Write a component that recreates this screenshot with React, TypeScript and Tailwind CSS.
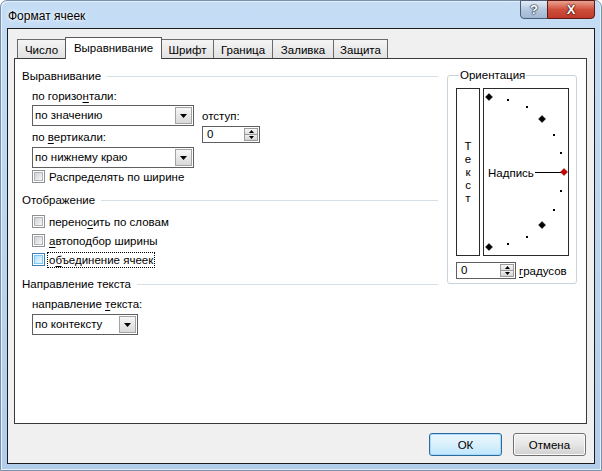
import React from 'react';

// Excel "Формат ячеек" dialog, Windows 7 look

function TriDown({ w = 7, h = 4 }: { w?: number; h?: number }) {
  return (
    <svg width={w} height={h} viewBox={`0 0 ${w} ${h}`}>
      <path d={`M0 0H${w}L${w / 2} ${h}Z`} fill="#000" />
    </svg>
  );
}

function TriUp({ w = 7, h = 4 }: { w?: number; h?: number }) {
  return (
    <svg width={w} height={h} viewBox={`0 0 ${w} ${h}`}>
      <path d={`M0 ${h}H${w}L${w / 2} 0Z`} fill="#000" />
    </svg>
  );
}

function Combo({ value, width }: { value: string; width: string }) {
  return (
    <div className={`${width} h-[21px] flex border border-[#5f5f5f] bg-white`}>
      <span className="flex-1 pl-[2px] leading-[19px] whitespace-nowrap">{value}</span>
      <span className="w-[17px] m-px flex items-center justify-center border border-[#a3a3a3] bg-gradient-to-b from-[#f7f7f7] to-[#d9d9d9]">
        <TriDown />
      </span>
    </div>
  );
}

function Spin({ value, width }: { value: string; width: string }) {
  return (
    <div className={`${width} h-[17px] flex border border-[#5f5f5f] bg-white`}>
      <span className="flex-1 pl-[4px] leading-[15px]">{value}</span>
      <span className="w-[14px] my-px mr-px flex flex-col">
        <span className="flex-1 flex items-center justify-center border border-[#9c9c9c] bg-gradient-to-b from-[#f8f8f8] to-[#dedede]">
          <TriUp w={5} h={3} />
        </span>
        <span className="flex-1 flex items-center justify-center border border-t-0 border-[#9c9c9c] bg-gradient-to-b from-[#f0f0f0] to-[#d4d4d4]">
          <TriDown w={5} h={3} />
        </span>
      </span>
    </div>
  );
}

function Check({ hover }: { hover?: boolean }) {
  return (
    <span
      className={`w-[13px] h-[13px] shrink-0 p-px border bg-white ${
        hover ? 'border-[#3c7fb1]' : 'border-[#8e8f8f]'
      }`}
    >
      <span
        className={`block w-full h-full border ${
          hover
            ? 'border-[#79c6f9] bg-gradient-to-br from-[#b1dffd] to-[#e9f7fe]'
            : 'border-[#b0b4ba] bg-gradient-to-br from-[#cfd2d6] to-[#f7f7f7]'
        }`}
      />
    </span>
  );
}

function CheckRow({ children, focus }: { children: React.ReactNode; focus?: boolean }) {
  return (
    <div className="h-[19px] flex items-center">
      <Check hover={focus} />
      <span
        className={`ml-[2px] px-px border whitespace-nowrap leading-[14px] ${
          focus ? 'border-dotted border-[#000]' : 'border-transparent'
        }`}
      >
        {children}
      </span>
    </div>
  );
}

function GroupHeader({ title }: { title: string }) {
  return (
    <div className="h-[16px] flex items-center pl-[7px]">
      <span className="whitespace-nowrap">{title}</span>
      <span className="flex-1 h-px ml-[6px] bg-[#d5dfe5]" />
    </div>
  );
}

function U({ children }: { children: React.ReactNode }) {
  return <span className="underline underline-offset-[2px]">{children}</span>;
}

function Dial() {
  const cx = 5;
  const cy = 83;
  const r = 75;
  const marks = [];
  for (let i = 0; i <= 12; i++) {
    const a = ((-90 + i * 15) * Math.PI) / 180;
    const x = cx + r * Math.cos(a);
    const y = cy + r * Math.sin(a);
    if (i % 3 === 0) {
      const red = i === 6;
      marks.push(
        <polygon
          key={i}
          points={`${x},${y - 3.5} ${x + 3.5},${y} ${x},${y + 3.5} ${x - 3.5},${y}`}
          fill={red ? '#d00000' : '#000'}
          stroke={red ? '#5a0000' : '#000'}
          strokeWidth={0.5}
        />
      );
    } else {
      marks.push(<rect key={i} x={Math.round(x) - 1} y={Math.round(y) - 1} width={2} height={2} fill="#000" />);
    }
  }
  return (
    <svg width="84" height="166" viewBox="0 0 84 166" className="block">
      {marks}
      <line x1="51" y1="83.5" x2="77" y2="83.5" stroke="#000" strokeWidth="1" />
      <text x="4" y="87.5" fontSize="11.5" fontFamily="Liberation Sans, Arial, sans-serif" fill="#000">
        Надпись
      </text>
    </svg>
  );
}

const tabs = [
  { label: 'Число', w: 'w-[49px]' },
  { label: 'Выравнивание', w: 'w-[97px]', active: true },
  { label: 'Шрифт', w: 'w-[53px]' },
  { label: 'Граница', w: 'w-[60px]' },
  { label: 'Заливка', w: 'w-[62px]' },
  { label: 'Защита', w: 'w-[55px]' },
];

export default function App() {
  return (
    <div className="w-[602px] h-[471px] flex flex-col px-[6px] pb-[6px] rounded-t-[7px] border border-[#7890ad] bg-gradient-to-b from-[#c4ddf5] via-[#bcd6f0] to-[#b2cdea] shadow-[inset_1px_1px_0_#e8f1fa,inset_-1px_-1px_0_#e8f1fa] font-['Liberation_Sans',Arial,sans-serif] text-[11.5px] leading-[16px] text-black">
      {/* Title bar */}
      <div className="h-[27px] shrink-0 flex items-start justify-between">
        <span className="pl-px pt-[7px] text-[12px] leading-[16px] [text-shadow:0_0_6px_#ffffff,0_0_3px_#ffffff]">
          Формат ячеек
        </span>
        <div className="flex -mt-px">
          <div className="w-[28px] h-[19px] flex items-center justify-center rounded-bl-[4px] border border-[#4b5d74] bg-gradient-to-b from-[#e3ecf6] via-[#b6c8de] to-[#9fb6d3] text-white font-bold text-[13px] leading-none [text-shadow:0_0_1px_#1b2a3c,0_0_1px_#1b2a3c,0_0_2px_#1b2a3c]">
            ?
          </div>
          <div className="w-[48px] h-[19px] -ml-px flex items-center justify-center rounded-br-[4px] border border-[#5b1b12] bg-gradient-to-b from-[#e8a190] via-[#cf4f3b] to-[#c0392b] text-white font-bold text-[13px] leading-none [text-shadow:0_0_1px_#3a0a04,0_0_1px_#3a0a04,0_0_2px_#3a0a04]">
            X
          </div>
        </div>
      </div>

      {/* Client area */}
      <div className="flex-1 flex flex-col border border-[#1c1c1c] bg-[#f0f0f0] pt-[8px] pl-[6px] pr-[7px]">
        {/* Tabs */}
        <div className="h-[21px] flex items-end pl-[3px]">
          {tabs.map((t, i) =>
            t.active ? (
              <div
                key={t.label}
                className={`${t.w} h-[22px] -mb-px ${i > 0 ? '-ml-px' : ''} relative z-10 flex justify-center pt-[2px] border border-b-0 border-[#5a5a5a] bg-white whitespace-nowrap`}
              >
                {t.label}
              </div>
            ) : (
              <div
                key={t.label}
                className={`${t.w} h-[19px] ${i > 0 ? '-ml-px' : ''} flex justify-center pt-[2px] border border-b-0 border-[#6a6a6a] bg-gradient-to-b from-[#f4f4f4] to-[#e2e2e2] whitespace-nowrap`}
              >
                {t.label}
              </div>
            )
          )}
        </div>

        {/* Panel */}
        <div className="h-[366px] flex border border-[#3a3a3a] bg-white">
          {/* Left column */}
          <div className="w-[423px] pt-[9px] flex flex-col">
            <GroupHeader title="Выравнивание" />
            <div className="pl-[17px] flex flex-col">
              <div className="mt-[4px]">
                по горизо<U>н</U>тали:
              </div>
              <div className="mt-px flex">
                <div className="flex flex-col">
                  <Combo value="по значению" width="w-[162px]" />
                  <div className="mt-[3px]">
                    по <U>в</U>ертикали:
                  </div>
                  <div className="mt-[2px]">
                    <Combo value="по нижнему краю" width="w-[162px]" />
                  </div>
                </div>
                <div className="ml-[8px] flex flex-col">
                  <div className="mt-[3px]">отступ:</div>
                  <div className="mt-[2px]">
                    <Spin value="0" width="w-[58px]" />
                  </div>
                </div>
              </div>
              <div className="mt-[-1px]">
                <CheckRow>Распределять по ширине</CheckRow>
              </div>
            </div>

            <div className="mt-[6px]">
              <GroupHeader title="Отображение" />
            </div>
            <div className="pl-[17px] mt-[4px] flex flex-col">
              <CheckRow>
                перено<U>с</U>ить по словам
              </CheckRow>
              <CheckRow>
                <U>а</U>втоподбор ширины
              </CheckRow>
              <CheckRow focus>
                о<U>б</U>ъединение ячеек
              </CheckRow>
            </div>

            <div className="mt-[7px]">
              <GroupHeader title="Направление текста" />
            </div>
            <div className="pl-[17px] flex flex-col">
              <div className="mt-[4px]">
                направление <U>т</U>екста:
              </div>
              <div className="mt-[2px]">
                <Combo value="по контексту" width="w-[106px]" />
              </div>
            </div>
          </div>

          {/* Orientation */}
          <fieldset className="ml-[9px] mt-[8px] w-[130px] h-[217px] border border-[#c9d3db] rounded-[3px] pl-[8px] pr-[7px]">
            <legend className="ml-[3px] px-px leading-[16px]">Ориентация</legend>
            <div className="mt-[5px] flex gap-[3px]">
              <div className="w-[24px] h-[168px] border border-[#2a2a2a] flex flex-col items-center justify-center leading-[13px]">
                <span className="h-[13px]">Т</span>
                <span className="h-[13px]">е</span>
                <span className="h-[13px]">к</span>
                <span className="h-[13px]">с</span>
                <span className="h-[13px]">т</span>
              </div>
              <div className="w-[86px] h-[168px] border border-[#2a2a2a]">
                <Dial />
              </div>
            </div>
            <div className="mt-[6px] flex items-center">
              <Spin value="0" width="w-[60px]" />
              <span className="ml-[3px]">
                <U>г</U>радусов
              </span>
            </div>
          </fieldset>
        </div>

        {/* Buttons */}
        <div className="mt-[9px] flex justify-end gap-[11px] pr-px">
          <button className="w-[73px] h-[23px] rounded-[3px] border border-[#2d6a9f] bg-gradient-to-b from-[#eaf6fd] via-[#d9f0fc] to-[#bee6fd] shadow-[inset_0_0_0_1px_#a6dcf8] text-[11.5px] leading-[16px]">
            ОК
          </button>
          <button className="w-[73px] h-[23px] rounded-[3px] border border-[#707070] bg-gradient-to-b from-[#f2f2f2] via-[#e6e6e6] to-[#d0d0d0] shadow-[inset_0_0_0_1px_#fbfbfb] text-[11.5px] leading-[16px]">
            Отмена
          </button>
        </div>
      </div>
    </div>
  );
}
